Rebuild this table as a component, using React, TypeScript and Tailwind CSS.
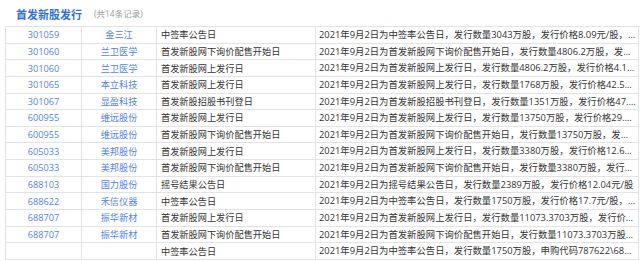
const rows = [
  ['301059', '金三江', '中签率公告日', '2021年9月2日为中签率公告日，发行数量3043万股，发行价格8.09元/股，申购代码301059'],
  ['301060', '兰卫医学', '首发新股网下询价配售开始日', '2021年9月2日为首发新股网下询价配售开始日，发行数量4806.2万股，发行价格4.10元/股'],
  ['301060', '兰卫医学', '首发新股网上发行日', '2021年9月2日为首发新股网上发行日，发行数量4806.2万股，发行价格4.1元/股'],
  ['301065', '本立科技', '首发新股网上发行日', '2021年9月2日为首发新股网上发行日，发行数量1768万股，发行价格42.5元/股'],
  ['301067', '显盈科技', '首发新股招股书刊登日', '2021年9月2日为首发新股招股书刊登日，发行数量1351万股，发行价格47.4元/股'],
  ['600955', '维远股份', '首发新股网上发行日', '2021年9月2日为首发新股网上发行日，发行数量13750万股，发行价格29.5元/股'],
  ['600955', '维远股份', '首发新股网下询价配售开始日', '2021年9月2日为首发新股网下询价配售开始日，发行数量13750万股，发行价格29.5元/股'],
  ['605033', '美邦股份', '首发新股网上发行日', '2021年9月2日为首发新股网上发行日，发行数量3380万股，发行价格12.69元/股'],
  ['605033', '美邦股份', '首发新股网下询价配售开始日', '2021年9月2日为首发新股网下询价配售开始日，发行数量3380万股，发行价格12.69元/股'],
  ['688103', '国力股份', '摇号结果公告日', '2021年9月2日为摇号结果公告日，发行数量2389万股，发行价格12.04元/股'],
  ['688622', '禾信仪器', '中签率公告日', '2021年9月2日为中签率公告日，发行数量1750万股，发行价格17.7元/股，申购代码787622'],
  ['688707', '振华新材', '首发新股网上发行日', '2021年9月2日为首发新股网上发行日，发行数量11073.3703万股，发行价格17.63元/股'],
  ['688707', '振华新材', '首发新股网下询价配售开始日', '2021年9月2日为首发新股网下询价配售开始日，发行数量11073.3703万股，发行价格17.63元/股'],
  ['', '', '中签率公告日', '2021年9月2日为中签率公告日，发行数量1750万股，申购代码787622\\688622'],
];

export default function App() {
  return (
    <div className="w-[640px] h-[261px] bg-white overflow-hidden font-['Open_Sans','Noto_Sans_CJK_SC',sans-serif]">
      <div className="flex items-center h-[26px] pl-[16px] pt-[2px] gap-[12px]">
        <span className="text-[11px] font-bold text-[#3170d2] leading-none">首发新股发行</span>
        <span className="text-[8.5px] text-[#999] leading-none">(共14条记录)</span>
      </div>

      <div className="ml-[5px] grid grid-cols-[76px_75px_159px_323px] auto-rows-[16.65px] border-t border-l border-[#e3e3e3] text-[9.2px] leading-none">
        {rows.map((r, i) => (
          <div key={i} className="contents">
            <div className="border-r border-b border-[#e3e3e3] flex items-center justify-center text-[#5583e6]">{r[0]}</div>
            <div className="border-r border-b border-[#e3e3e3] flex items-center justify-center text-[#5583e6]">{r[1]}</div>
            <div className="border-r border-b border-[#e3e3e3] flex items-center pl-[4px] text-[#333]">{r[2]}</div>
            <div className="border-r border-b border-[#e3e3e3] pl-[3px] pr-[2px] text-[#333] text-[9.35px] truncate leading-[15.65px]">
              {r[3]}
            </div>
          </div>
        ))}
      </div>
    </div>
  );
}
